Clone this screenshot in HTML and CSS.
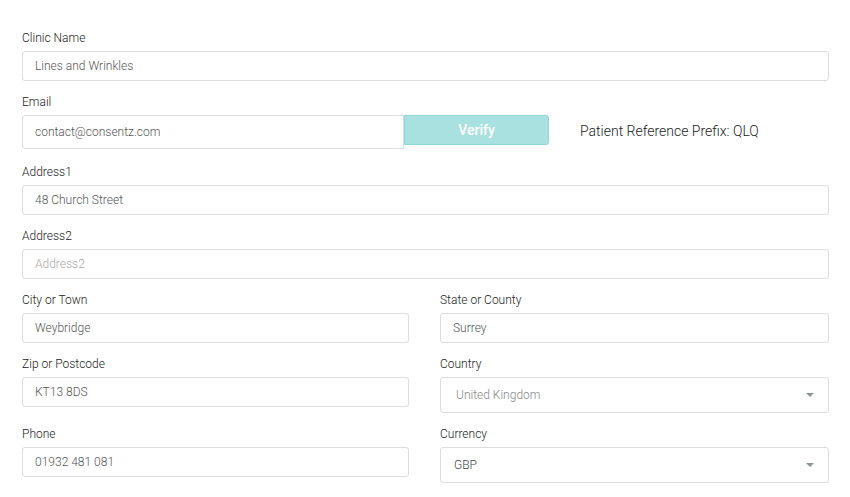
FILE: index.html
```html
<!DOCTYPE html>
<html lang="en">
<head>
  <meta charset="UTF-8" />
  <meta name="viewport" content="width=device-width, initial-scale=1.0" />
  <title>Clinic Details</title>
  <link rel="stylesheet" href="styles.css">
</head>
<body>
  <form class="clinic-form">
    <div class="field">
      <label>Clinic Name</label>
      <input type="text" value="Lines and Wrinkles" />
    </div>

    <div class="field field-email">
      <label>Email</label>
      <div class="email-row">
        <input type="text" class="email-input" value="contact@consentz.com" />
        <button type="button" class="verify-btn">Verify</button>
        <span class="prefix">Patient Reference Prefix: QLQ</span>
      </div>
    </div>

    <div class="field">
      <label>Address1</label>
      <input type="text" value="48 Church Street" />
    </div>

    <div class="field">
      <label>Address2</label>
      <input type="text" placeholder="Address2" />
    </div>

    <div class="two-col">
      <div class="field">
        <label>City or Town</label>
        <input type="text" value="Weybridge" />
      </div>
      <div class="field">
        <label>State or County</label>
        <input type="text" value="Surrey" />
      </div>
    </div>

    <div class="two-col">
      <div class="field">
        <label>Zip or Postcode</label>
        <input type="text" value="KT13 8DS" />
      </div>
      <div class="field">
        <label>Country</label>
        <div class="select-wrap">
          <select class="muted">
            <option>United Kingdom</option>
          </select>
        </div>
      </div>
    </div>

    <div class="two-col">
      <div class="field">
        <label>Phone</label>
        <input type="text" value="01932 481 081" />
      </div>
      <div class="field">
        <label>Currency</label>
        <div class="select-wrap">
          <select class="currency">
            <option>GBP</option>
          </select>
        </div>
      </div>
    </div>
  </form>
</body>
</html>
```

FILE: styles.css
```css
/* Reset & Base */
* { box-sizing: border-box; margin: 0; padding: 0; }
html, body { background: #fff; font-family: Roboto, 'Liberation Sans', sans-serif; font-weight: 300; color: #333; }

.clinic-form { padding: 30px 21px 0 22px; }

.field { display: flex; flex-direction: column; margin-bottom: 13px; }
.field label { font-size: 12px; line-height: 16px; font-weight: 300; color: #222; margin-bottom: 5px; }

input, select {
  height: 30px; width: 100%; border: 1px solid #ddd; border-radius: 3px;
  padding: 0 12px; font-family: inherit; font-size: 12px; font-weight: 300; color: #555; background: #fff; outline: none;
}
input::placeholder { color: #aaa; }

/* email + verify + prefix */
.email-row { display: flex; align-items: flex-start; height: 36px; }
.email-input { width: 382px; height: 34px; border-radius: 3px 0 0 3px; }
.verify-btn {
  width: 145px; height: 30px; background: #a8e1df; border: 1px solid #8fd8d5; border-radius: 0 3px 3px 0;
  color: #fff; font-family: inherit; font-size: 14px; font-weight: 500; cursor: pointer;
}
.prefix { margin-left: 31px; font-size: 14px; line-height: 32px; font-weight: 300; color: #222; }

.two-col { display: grid; grid-template-columns: 387px 389px; column-gap: 31px; }

/* selects with a small grey caret */
.select-wrap { position: relative; }
.select-wrap select { appearance: none; -webkit-appearance: none; height: 36px; padding-left: 15px; color: #444; }
.select-wrap select.muted { color: #888; }
.select-wrap select.currency { padding-left: 13px; }
.select-wrap::after {
  content: ''; position: absolute; right: 15px; top: 16px;
  border-left: 4px solid transparent; border-right: 4px solid transparent; border-top: 4px solid #8a9398;
}
```
